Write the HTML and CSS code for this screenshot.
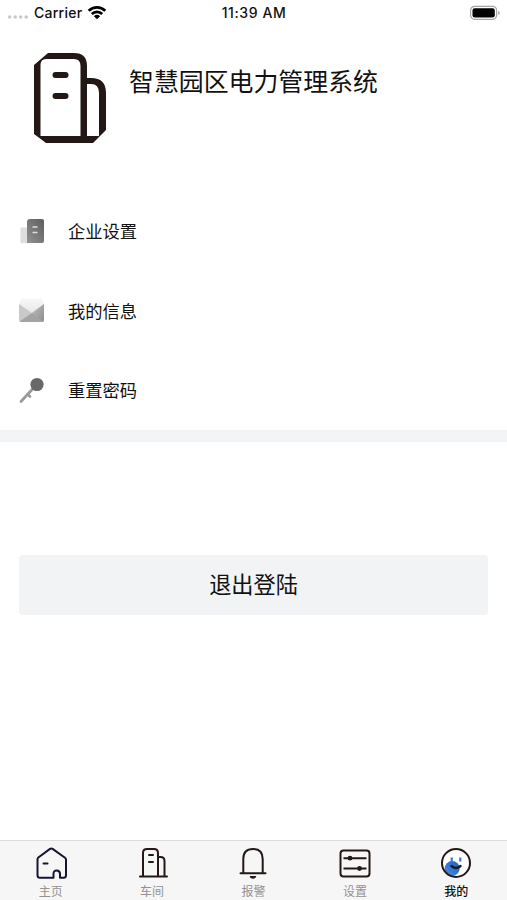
FILE: index.html
```html
<!DOCTYPE html>
<html lang="zh-CN">
<head>
<meta charset="utf-8">
<title>我的</title>
<link rel="stylesheet" href="styles.css">
</head>
<body>
<div class="app">
  <header class="status">
    <div class="carrier">
      <svg width="22" height="6" viewBox="0 0 22 6" fill="#c9c9c9"><circle cx="2.7" cy="3" r="1.8"/><circle cx="8.2" cy="3" r="1.800"/><circle cx="13.700" cy="3" r="1.800"/><circle cx="19.200" cy="3" r="1.800"/></svg>
      <span class="carrier-name">Carrier</span>
      <svg class="wifi" width="20" height="15" viewBox="0 0 20 15" fill="none" stroke="#000" stroke-width="2.7"><path d="M1.7 5.7a11.8 11.8 0 0 1 16.6 0M4.8 9a7.4 7.4 0 0 1 10.4 0"/><path d="M10 14.3 6.9 11.2a4.5 4.5 0 0 1 6.2 0z" fill="#000" stroke="none"/></svg>
    </div>
    <span class="time">11:39 AM</span>
    <svg class="battery" width="32" height="16" viewBox="0 0 32 16"><rect x="1.6" y="1.3" width="26" height="13" rx="4" fill="#fff" stroke="#a5a5a5" stroke-width="1.2"/><rect x="3.5" y="3.2" width="22.3" height="9.3" rx="2.2"/><path d="M29.2 6v4q1.6-.7 1.6-2t-1.6-2z" fill="#a5a5a5"/></svg>
  </header>

  <section class="profile">
    <svg class="logo" width="72" height="90" viewBox="0 0 72 90">
      <path d="M14 0h26q13 0 13 13v12h4q15 0 15 15v37L59 90H12L0 81V12z" fill="#231815"/>
      <path d="M12 6h28q6.500 0 6.500 7v70H6.500V12q0-6 5.500-6zM53 31h4q8 0 8 9v43H53z" fill="#fff"/>
      <path d="M21.500 22h10M21.500 43h10" stroke="#231815" stroke-width="6" stroke-linecap="round"/>
    </svg>
    <h1 class="name">智慧园区电力管理系统</h1>
  </section>

  <nav class="menu">
    <a class="row">
      <svg width="26" height="28" viewBox="0 0 26 28">
        <defs><linearGradient id="tower" x1="0" y1="1" x2="1" y2="0"><stop offset="0" stop-color="#929292"/><stop offset="1" stop-color="#5d5d5d"/></linearGradient></defs>
        <path d="M1.500 11.500q0-1 1-1H9V26H1.500z" fill="#dedede"/><path d="M8 5q0-3 3-3h12q2 0 2 2v20q0 2-2 2H8z" fill="url(#tower)"/>
        <path d="M13.500 10h5M13.500 15.500h5" stroke="#ddd" stroke-width="1.500"/>
      </svg>
      <span>企业设置</span>
    </a>
    <a class="row">
      <svg width="26" height="28" viewBox="0 0 26 28">
        <defs>
          <linearGradient id="mail" x1="0" y1="0" x2="1" y2="1"><stop offset="0" stop-color="#c0c0c0"/><stop offset="1" stop-color="#8c8c8c"/></linearGradient>
          <linearGradient id="flap" x1="0" y1="0" x2="0" y2="1"><stop offset="0" stop-color="#f8f8f8"/><stop offset="1" stop-color="#e6e6e6"/></linearGradient>
        </defs>
        <path d="M0 8 2 2.500h21L25 8 13 18z" fill="url(#flap)"/>
        <path d="M0 8 13 17 25 8v16q0 2-2 2H2q-2 0-2-2z" fill="#c9c9c9"/><path d="M13 17 25 8v16q0 2-2 2z" fill="url(#mail)"/><path d="m.5 25.500 12.500-8.500 11.500 8.500-1.500.5H2z" fill="#a3a3a3"/>
      </svg>
      <span>我的信息</span>
    </a>
    <a class="row">
      <svg width="26" height="28" viewBox="0 0 26 28">
        <path d="M14.500 12 2 25.500M8.500 18l2.500 2.500" fill="none" stroke="#999" stroke-width="2.700" stroke-linecap="round"/><circle cx="18" cy="8.500" r="6.600" fill="#686868"/>
      </svg>
      <span>重置密码</span>
    </a>
  </nav>
  <div class="divider"></div>

  <main class="content"><button class="logout">退出登陆</button></main>

  <footer class="tabs">
    <a class="tab">
      <svg width="34" height="34" viewBox="0 0 34 34" fill="none" stroke="#17142f" stroke-width="2" stroke-linejoin="round" stroke-linecap="round"><path d="M4 11.800 16 2.900q1.300-.9 2.600 0l12.400 8.900q1 .8 1 2v15.500q0 2.500-2.500 2.500H26V28q0-3.500-3.300-3.500T19.500 28v3.800H6q-2.500 0-2.500-2.500V13.800q0-1.200.5-2zM9.500 17.500h4"/></svg>
      <span>主页</span>
    </a>
    <a class="tab">
      <svg width="34" height="34" viewBox="0 0 34 34" fill="none" stroke="#231815" stroke-width="2" stroke-linecap="round"><path d="M5 30.500h27M8 30V7q0-4 4-4h7q4 0 4 4v23M23 11h2.500q4 0 4 4v15M14 9h4M14 16h4"/></svg>
      <span>车间</span>
    </a>
    <a class="tab">
      <svg width="34" height="34" viewBox="0 0 34 34" fill="none" stroke="#231815" stroke-width="2" stroke-linecap="round"><path d="M4.500 27.200h25M7.300 27V13q0-10 9.700-10t9.700 10v14"/><path d="M13.700 30h6.600q-.5 2.800-3.300 2.800T13.700 30z" fill="#231815" stroke="none"/></svg>
      <span>报警</span>
    </a>
    <a class="tab">
      <svg width="34" height="34" viewBox="0 0 34 34" fill="none" stroke="#231815" stroke-width="2"><rect x="2.500" y="4.500" width="29" height="26" rx="3"/><path d="M5.500 12.200h23M5.500 22.500h23"/><g fill="#231815" stroke="none"><circle cx="12" cy="12.200" r="2.400"/><circle cx="21.500" cy="22.500" r="2.400"/></g></svg>
      <span>设置</span>
    </a>
    <a class="tab active">
      <svg width="34" height="34" viewBox="0 0 34 34" fill="none"><defs><linearGradient id="face" x1="0" y1="1" x2="1" y2="0"><stop offset="0" stop-color="#4a91df"/><stop offset="1" stop-color="#1c5ebd"/></linearGradient></defs><circle cx="17" cy="17" r="14" fill="#fff"/><circle cx="13.200" cy="22.500" r="7.500" fill="url(#face)"/><circle cx="17" cy="17" r="14" stroke="#231815" stroke-width="2"/><path d="M12.700 11.500v4.500M21.300 11.500v4" stroke="#3a78d3" stroke-width="2.200"/><path d="M12.500 20q4.500 3.800 9 0" stroke="#1b1b2a" stroke-width="2.400" stroke-linecap="round"/></svg>
      <span>我的</span>
    </a>
  </footer>
</div>
</body>
</html>
```

FILE: styles.css
```css
* { box-sizing: border-box; }
body { margin: 0; background: #fff; color: #111; font-family: "Liberation Sans", "Noto Sans CJK SC", sans-serif; }
svg { display: block; flex: none; }
.app { height: 900px; display: flex; flex-direction: column; }
.status { height: 26px; flex: none; display: grid; grid-template-columns: 1fr auto 1fr; align-items: center; padding: 0 6px 0 7px; font: 500 14px/26px Inter, sans-serif; }
.carrier { display: flex; align-items: center; }
.carrier svg:first-child { margin-top: 8px; }
.carrier-name { margin-left: 5px; letter-spacing: .25px; }
.wifi { margin-left: 5px; margin-top: -1px; }
.time { letter-spacing: .6px; }
.battery { justify-self: end; }
.profile { height: 165px; flex: none; display: flex; align-items: flex-start; padding: 27px 0 0 34px; }
.name { margin: 9px 0 0 23px; font-size: 24.9px; line-height: 40px; font-weight: 400; }
.menu { flex: none; }
.row { height: 79.5px; display: flex; align-items: center; gap: 23px; padding-left: 19px; font-size: 17.3px; }
.divider { height: 12px; flex: none; background: #f3f4f5; }
.content { flex: 1; padding: 113px 19px 0; }
.logout { display: block; width: 100%; height: 60px; padding: 0 0 3px; border: 0; border-radius: 4px; background: #f1f3f5; color: #111; font: inherit; font-size: 22.2px; }
.tabs { height: 60px; flex: none; display: grid; grid-template-columns: repeat(5, 1fr); border-top: 1px solid #dcdcdc; background: #f7f6f7; }
.tab { display: flex; flex-direction: column; align-items: center; padding-top: 5px; font-size: 12px; line-height: 20px; color: #929292; }
.tab svg { margin-bottom: 2px; }
.active { color: #111; font-weight: 500; }
```
